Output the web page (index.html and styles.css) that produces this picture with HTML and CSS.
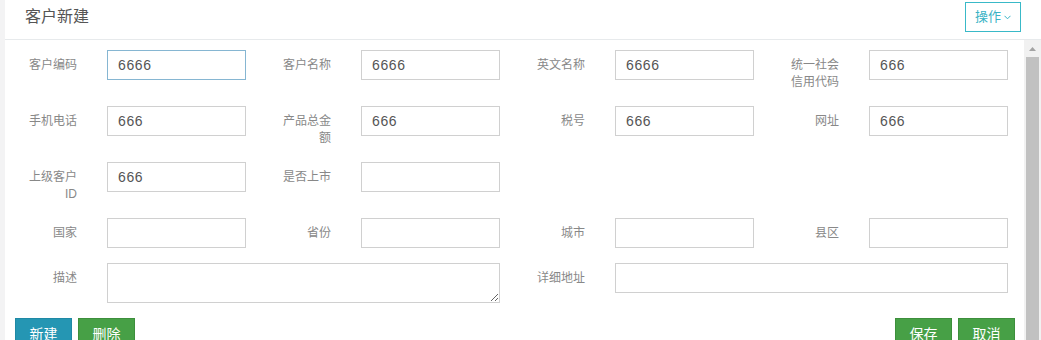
FILE: index.html
```html
<!DOCTYPE html>
<html lang="zh-CN">
<head>
<meta charset="utf-8">
<title>客户新建</title>
<link rel="stylesheet" href="styles.css">
</head>
<body>
<div class="page">
  <div class="header">
    <div class="title">客户新建</div>
    <button class="op-btn" type="button">操作<svg class="chev" width="7" height="5" viewBox="0 0 7 5"><polyline points="0.5,0.8 3.5,3.8 6.5,0.8" fill="none" stroke="#39b3c5" stroke-width="1"/></svg></button>
  </div>
  <div class="body">
    <div class="content">
      <div class="form-grid">
        <div class="field"><label class="lbl">客户编码</label><input class="inp focused" value="6666"></div>
        <div class="field"><label class="lbl">客户名称</label><input class="inp" value="6666"></div>
        <div class="field"><label class="lbl">英文名称</label><input class="inp" value="6666"></div>
        <div class="field"><label class="lbl">统一社会信用代码</label><input class="inp" value="666"></div>

        <div class="field"><label class="lbl">手机电话</label><input class="inp" value="666"></div>
        <div class="field"><label class="lbl">产品总金额</label><input class="inp" value="666"></div>
        <div class="field"><label class="lbl">税号</label><input class="inp" value="666"></div>
        <div class="field"><label class="lbl">网址</label><input class="inp" value="666"></div>

        <div class="field"><label class="lbl">上级客户ID</label><input class="inp" value="666"></div>
        <div class="field"><label class="lbl">是否上市</label><input class="inp" value=""></div>
        <div class="field empty"></div>
        <div class="field empty"></div>

        <div class="field"><label class="lbl">国家</label><input class="inp" value=""></div>
        <div class="field"><label class="lbl">省份</label><input class="inp" value=""></div>
        <div class="field"><label class="lbl">城市</label><input class="inp" value=""></div>
        <div class="field"><label class="lbl">县区</label><input class="inp" value=""></div>

        <div class="field wide"><label class="lbl">描述</label><textarea class="inp area"></textarea></div>
        <div class="field wide"><label class="lbl">详细地址</label><input class="inp" value=""></div>
      </div>
      <div class="actions">
        <div class="btn-group">
          <button class="btn btn-info" type="button">新建</button>
          <button class="btn btn-success" type="button">删除</button>
        </div>
        <div class="btn-group">
          <button class="btn btn-success" type="button">保存</button>
          <button class="btn btn-success" type="button">取消</button>
        </div>
      </div>
    </div>
    <div class="scrollbar">
      <div class="sb-arrow"><svg width="7" height="4" viewBox="0 0 7 4"><polygon points="3.5,0 7,4 0,4" fill="#a3a3a3"/></svg></div>
      <div class="sb-thumb"></div>
    </div>
  </div>
</div>
</body>
</html>
```

FILE: styles.css
```css
html, body {
  margin: 0;
  padding: 0;
  height: 100%;
}
body {
  background: #f3f3f4;
  font-family: "Liberation Sans", "Noto Sans CJK SC", sans-serif;
  overflow: hidden;
}
.page {
  margin-left: 5px;
  height: 100vh;
  background: #ffffff;
  display: flex;
  flex-direction: column;
  overflow: hidden;
}
.header {
  height: 39px;
  flex: none;
  border-bottom: 1px solid #e7eaec;
  display: flex;
  justify-content: space-between;
  align-items: flex-start;
  padding: 0 20px;
}
.title {
  font-size: 16px;
  line-height: 20px;
  padding-top: 7px;
  color: #555555;
}
.op-btn {
  margin-top: 2px;
  width: 56px;
  height: 30px;
  box-sizing: border-box;
  border: 1px solid #39b9c8;
  background: #ffffff;
  color: #39b3c5;
  font-family: "Liberation Sans", "Noto Sans CJK SC", sans-serif;
  font-size: 13px;
  line-height: 18px;
  padding: 0;
  display: flex;
  align-items: center;
  justify-content: center;
  gap: 3px;
}
.chev {
  display: block;
  margin-top: 1px;
}
.body {
  flex: 1;
  display: flex;
  min-height: 0;
}
.content {
  flex: 1;
  padding-top: 10px;
}
.form-grid {
  display: grid;
  grid-template-columns: repeat(4, 241px);
  column-gap: 13px;
  row-gap: 15px;
  align-items: start;
}
.field {
  display: flex;
  align-items: flex-start;
}
.field.wide {
  grid-column: span 2;
}
.lbl {
  flex: none;
  width: 54px;
  margin-left: 18px;
  margin-right: 30px;
  text-align: right;
  font-size: 12px;
  line-height: 17px;
  padding-top: 7px;
  color: #888888;
}
.inp {
  flex: none;
  width: 139px;
  height: 30px;
  box-sizing: border-box;
  border: 1px solid #d0d0d0;
  border-radius: 0;
  padding: 0 10px;
  margin: 0;
  font-family: "Liberation Sans", "Noto Sans CJK SC", sans-serif;
  font-size: 14px;
  letter-spacing: 0.6px;
  color: #555555;
  background: #ffffff;
  outline: none;
}
.field.wide .inp {
  flex: 1;
  width: auto;
}
.inp.focused {
  border-color: #86b6d2;
}
.inp.area {
  display: block;
  height: 40px;
  resize: both;
}
.actions {
  display: flex;
  justify-content: space-between;
  padding: 15px 9px 0 10px;
}
.btn-group {
  display: flex;
  gap: 6px;
}
.btn {
  width: 57px;
  height: 30px;
  box-sizing: border-box;
  padding: 1px 0 0;
  font-family: "Liberation Sans", "Noto Sans CJK SC", sans-serif;
  font-size: 14px;
  line-height: 20px;
  color: #ffffff;
  border: 1px solid transparent;
  border-radius: 0;
}
.btn-info {
  background: #2596b3;
  border-color: #1f89a5;
}
.btn-success {
  background: #47a046;
  border-color: #3d8f3c;
}
.scrollbar {
  flex: none;
  width: 17px;
  background: #f1f1f1;
  display: flex;
  flex-direction: column;
}
.sb-arrow {
  height: 17px;
  display: flex;
  align-items: center;
  justify-content: center;
}
.sb-arrow svg {
  display: block;
}
.sb-thumb {
  flex: 1;
  margin: 0 2px 0 2px;
  background: #c1c1c1;
}
```
